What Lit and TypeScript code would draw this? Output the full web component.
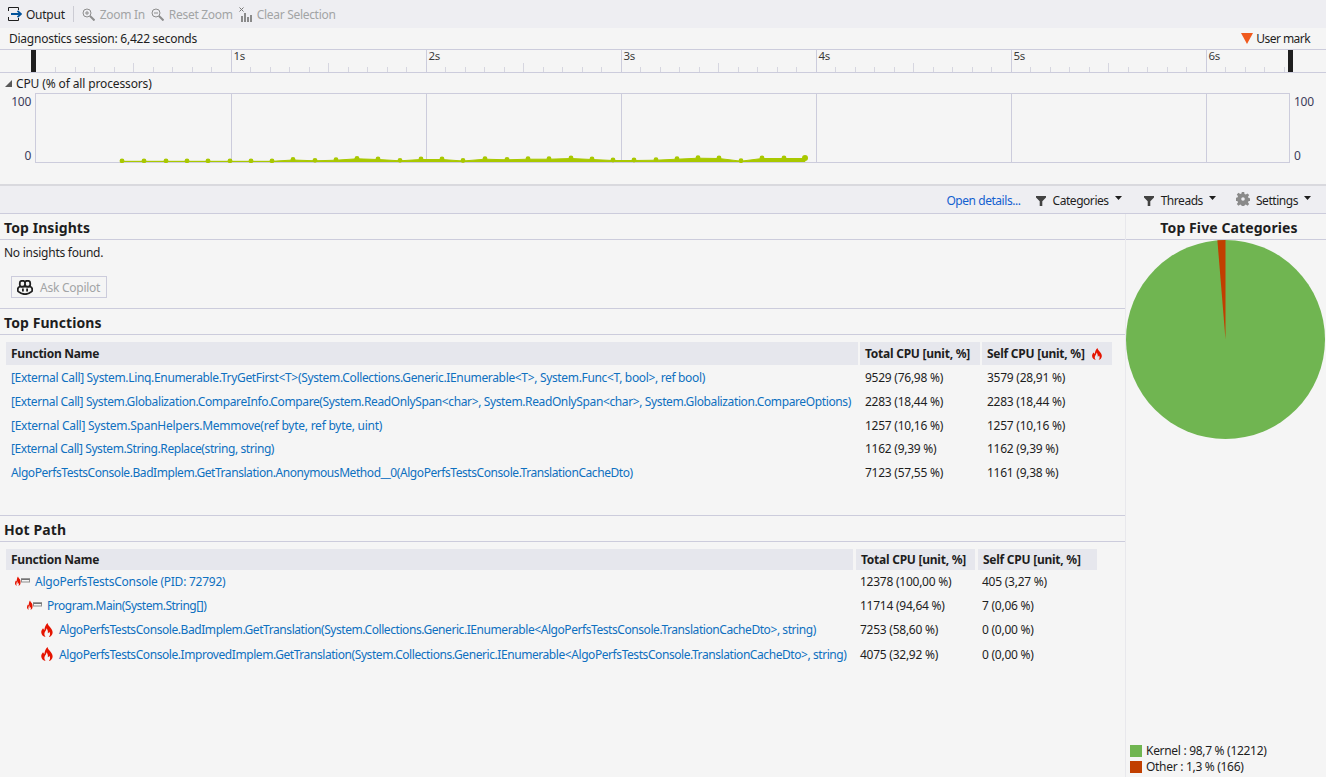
import { LitElement, css, html, svg } from "lit";
import { customElement } from "lit/decorators.js";

interface Row {
  name: string;
  total: string;
  self: string;
  indent?: number;
  icon?: "flame" | "path";
  track: number;
}

const topFunctions: Row[] = [
  { name: "[External Call] System.Linq.Enumerable.TryGetFirst<T>(System.Collections.Generic.IEnumerable<T>, System.Func<T, bool>, ref bool)", total: "9529 (76,98 %)", self: "3579 (28,91 %)", track: -0.335 },
  { name: "[External Call] System.Globalization.CompareInfo.Compare(System.ReadOnlySpan<char>, System.ReadOnlySpan<char>, System.Globalization.CompareOptions)", total: "2283 (18,44 %)", self: "2283 (18,44 %)", track: -0.38 },
  { name: "[External Call] System.SpanHelpers.Memmove(ref byte, ref byte, uint)", total: "1257 (10,16 %)", self: "1257 (10,16 %)", track: -0.25 },
  { name: "[External Call] System.String.Replace(string, string)", total: "1162 (9,39 %)", self: "1162 (9,39 %)", track: -0.42 },
  { name: "AlgoPerfsTestsConsole.BadImplem.GetTranslation.AnonymousMethod__0(AlgoPerfsTestsConsole.TranslationCacheDto)", total: "7123 (57,55 %)", self: "1161 (9,38 %)", track: -0.435 },
];

const hotPath: Row[] = [
  { name: "AlgoPerfsTestsConsole (PID: 72792)", total: "12378 (100,00 %)", self: "405 (3,27 %)", indent: 9, icon: "path", track: -0.25 },
  { name: "Program.Main(System.String[])", total: "11714 (94,64 %)", self: "7 (0,06 %)", indent: 21, icon: "path", track: -0.49 },
  { name: "AlgoPerfsTestsConsole.BadImplem.GetTranslation(System.Collections.Generic.IEnumerable<AlgoPerfsTestsConsole.TranslationCacheDto>, string)", total: "7253 (58,60 %)", self: "0 (0,00 %)", indent: 34, icon: "flame", track: -0.43 },
  { name: "AlgoPerfsTestsConsole.ImprovedImplem.GetTranslation(System.Collections.Generic.IEnumerable<AlgoPerfsTestsConsole.TranslationCacheDto>, string)", total: "4075 (32,92 %)", self: "0 (0,00 %)", indent: 34, icon: "flame", track: -0.43 },
];

// sampled from the cpu graph, [x, y] in page pixels
const cpu: [number, number][] = [
  [122, 160.8], [144, 160.8], [166, 160.8], [187, 160.8], [208, 160.8], [230, 160.8], [251, 160.8], [272, 160.8],
  [293, 159.5], [315, 160.3], [336, 159.7], [357, 158.3], [378, 159], [400, 160.3], [421, 159], [442, 159],
  [463, 160.5], [485, 158.7], [507, 159.3], [528, 158.7], [549, 158.7], [571, 158], [592, 159], [613, 160],
  [634, 160], [656, 159.7], [677, 158.7], [698, 157.7], [719, 158], [741, 160.7], [762, 158], [784, 158], [805, 158],
];

const secX = (s: number) => 36 + s * 195 + 0.5;

const flame = (size = 12) => html`<svg width=${size} height=${size} viewBox="0 0 12 12">
  <path fill="#e51400" d="M6.4 0C6.8 2 8.2 2.8 9.2 4.2 10.3 5.6 11 6.900 10.800 8.500 10.500 10.500 9 11.700 7.600 12 8.800 10.800 9 9.200 8 7.600 7.700 8.300 7.200 8.700 6.700 8.800 7 7.300 6.500 5.600 5.500 4.600 5.500 6 4.700 7 4.100 8 3.500 9.200 3.700 10.800 4.800 12 3 11.700 1.300 10.300 1.100 8.300 .9 6.700 1.700 5.500 2.600 4.500 3 5.100 3.300 5.600 3.800 5.900 3.900 3.800 4.800 1.600 6.400 0Z"/>
</svg>`;

const pathIcon = () => html`<svg width="15" height="10" viewBox="0 0 15 10">
  <path fill="#e51400" d="M3 .5C3.200 1.700 4.300 2.400 5 3.600 5.600 4.800 5.500 6 5.500 7.200 5.400 8.500 4.500 9.500 3.400 9.800 4 9 4.100 8 3.500 7 3.300 7.500 3 7.800 2.600 7.900 2.800 6.900 2.600 6 2.100 5.300 2 6.300 1.500 6.900 1.400 7.800 1.300 8.500 1.500 9.300 2 9.800 .9 9.500 .1 8.500 0 7.400-.1 6.200.5 5.400 1 4.600 1.200 5 1.400 5.300 1.700 5.500 1.700 3.900 2 1.800 3 .5Z"/>
  <path fill="#3c3c3c" d="M6 2.500h9v1.200H6z"/>
  <path fill="#8f8f8f" d="M6 3.700h1V6H6zM14 3.700h1V6h-1zM6 5.500h9v1H6z"/>
</svg>`;

const funnel = html`<svg width="10" height="10" viewBox="0 0 10 10"><path fill="#424242" d="M0 0h10v1.500L6.300 5.300V10H3.700V5.300L0 1.500Z"/></svg>`;

const caret = html`<svg class="caret" width="7" height="4" viewBox="0 0 7 4"><path fill="#1e1e1e" d="M0 0h7L3.500 4Z"/></svg>`;

@customElement("app-root")
export class AppRoot extends LitElement {
  private ruler() {
    const ticks = [];
    for (let i = 1; i * 19.5 + 36 < 1288; i++) {
      if (i % 10 === 0) continue;
      const x = Math.floor(36 + i * 19.5) + 0.5;
      const h = i % 5 === 0 ? 9 : 5;
      ticks.push(svg`<line x1=${x} x2=${x} y1=${22 - h} y2="22" stroke="#d6d6e0" stroke-width="1"/>`);
    }
    return html`<svg width="1326" height="22" viewBox="0 0 1326 22">
        ${ticks}
        ${[1, 2, 3, 4, 5, 6].map((s) => svg`<line x1=${secX(s)} x2=${secX(s)} y1="0" y2="22" stroke="#ccccdc"/>`)}
        <rect x="31" y="0" width="5" height="22" fill="#1e1e1e"/>
        <rect x="1288" y="0" width="5" height="22" fill="#1e1e1e"/>
      </svg>
      ${[1, 2, 3, 4, 5, 6].map((s) => html`<span class="rl" style="left:${secX(s) + 2}px">${s}s</span>`)}`;
  }

  private graph() {
    const top = 93;
    const area = `M122 ${161.5 - top} ` + cpu.map(([x, y]) => `L${x} ${y - top + 0.5}`).join(" ") + ` L805 ${161.5 - top}Z`;
    return html`<svg width="1255" height="70" viewBox="35 0 1255 70">
      <rect x="35.500" y=".5" width="1254" height="69" fill="none" stroke="#ccccdc"/>
      ${[1, 2, 3, 4, 5, 6].map((s) => svg`<line x1=${secX(s)} x2=${secX(s)} y1="0" y2="69" stroke="#ccccdc"/>`)}
      <path d=${area} fill="#a9c800" stroke="#a9c800" stroke-width="1"/>
      ${cpu.map(([x, y], i) => svg`<circle cx=${x} cy=${y - top} r=${i === cpu.length - 1 ? 3 : 2.4} fill="#a9c800"/>`)}
    </svg>`;
  }

  private pie() {
    const a = (1.3 / 100) * Math.PI * 2;
    const x = 100 - Math.sin(a) * 100;
    const y = 100 - Math.cos(a) * 100;
    return html`<svg width="199" height="199" viewBox="0 0 200 200">
      <circle cx="100" cy="100" r="100" fill="#70b551"/>
      <path d="M100 100L100 0A100 100 0 0 0 ${x} ${y}Z" fill="#c13f00"/>
    </svg>`;
  }

  private table(rows: Row[], kind: "top" | "hot") {
    return html`<div class="table ${kind}">
      <div class="th">Function Name</div>
      <div class="th">Total CPU [unit, %]</div>
      <div class="th">Self CPU [unit, %] ${kind === "top" ? flame(12) : ""}</div>
      ${rows.map(
        (r) => html`
          <div class="td name" style="padding-left:${r.indent ?? 5}px">
            ${r.icon === "flame" ? flame(14) : r.icon === "path" ? pathIcon() : ""}<span style="letter-spacing:${r.track}px">${r.name}</span>
          </div>
          <div class="td">${r.total}</div>
          <div class="td">${r.self}</div>
        `,
      )}
    </div>`;
  }

  render() {
    return html`
      <div class="toolbar">
        <span class="tool on">
          <svg width="14" height="14" viewBox="0 0 14 14">
            <path fill="none" stroke="#1e1e1e" d="M.5 4V.5h10V3M10.500 11V13.500H.5V10"/>
            <path fill="none" stroke="#00539c" stroke-width="1.800" d="M3 7h9.500M9.500 3.800 13 7 9.500 10.200"/>
          </svg>
          Output
        </span>
        <span class="sep"></span>
        <span class="tool">
          <svg width="13" height="13" viewBox="0 0 13 13"><circle cx="5" cy="5" r="4" fill="none" stroke="#8e8e8e"/><path stroke="#8e8e8e" d="M3 5h4M5 3v4"/><path stroke="#8e8e8e" stroke-width="2" d="M8 8l4.500 4.500"/></svg>
          Zoom In
        </span>
        <span class="tool">
          <svg width="13" height="13" viewBox="0 0 13 13"><circle cx="5" cy="5" r="4" fill="none" stroke="#8e8e8e"/><path stroke="#8e8e8e" d="M3 5h4"/><path stroke="#8e8e8e" stroke-width="2" d="M8 8l4.500 4.500"/></svg>
          Reset Zoom
        </span>
        <span class="tool last">
          <svg width="14" height="15" viewBox="0 0 14 15"><path stroke="#777" d="M.5 .5l4 4M4.500 .5l-4 4"/><path fill="#8a8a8a" d="M2 9h2v6H2zM5 6h2v9H5zM8 10h2v5H8zM11 8h2v7h-2z"/></svg>
          Clear Selection
        </span>
      </div>

      <div class="session">
        <span>Diagnostics session: 6,422 seconds</span>
        <span class="mark">
          <svg width="12" height="11" viewBox="0 0 12 11"><path fill="#f05a1e" d="M0 0h12L6 11Z"/></svg>
          <span>User mark</span>
        </span>
      </div>

      <div class="ruler-row">${this.ruler()}</div>

      <div class="swimlane">
        <div class="lane-title">
          <svg width="7" height="7" viewBox="0 0 7 7"><path fill="#595959" d="M7 0v7H0Z"/></svg>
          <span>CPU (% of all processors)</span>
        </div>
        <div class="lane">
          <div class="axis left"><span>100</span><span>0</span></div>
          ${this.graph()}
          <div class="axis right"><span>100</span><span>0</span></div>
        </div>
      </div>

      <div class="actions">
        <a>Open details...</a>
        <span class="act">${funnel} Categories ${caret}</span>
        <span class="act threads">${funnel} Threads ${caret}</span>
        <span class="act">
          <svg class="gear" width="14" height="14" viewBox="0 0 14 14">
            <path fill="#8a8a8a" fill-rule="evenodd" d="M5.800 0h2.400l.3 2 1.300.6 1.700-1.200 1.700 1.700-1.200 1.700.6 1.300 2 .3v2.400l-2 .3-.6 1.300 1.200 1.700-1.700 1.700-1.700-1.200-1.300.6-.3 2H5.800l-.3-2-1.300-.6-1.700 1.200-1.700-1.700 1.200-1.700-.6-1.300-2-.3V5.800l2-.3.6-1.300L.8 2.500 2.500.8l1.700 1.200 1.300-.6ZM7 5.200a1.800 1.800 0 1 0 0 3.600 1.800 1.800 0 0 0 0-3.600Z"/>
          </svg>
          Settings ${caret}
        </span>
      </div>

      <div class="body">
        <div class="main">
          <section class="insights">
            <h2>Top Insights</h2>
            <p>No insights found.</p>
            <button>
              <svg width="16" height="15" viewBox="0 0 16 15">
                <path fill="#f5f5f5" stroke="#1e1e1e" stroke-width="1.800" d="M3 6.500C1.700 7 .8 7.800.8 9v1.500c0 .5.200.8.6 1.100C3 12.900 5.500 14.200 8 14.200s5-1.300 6.600-2.600c.4-.3.6-.6.6-1.100V9c0-1.200-.9-2-2.200-2.500Z"/>
                <path fill="#f5f5f5" stroke="#1e1e1e" stroke-width="1.800" d="M5 .8h1c1.200 0 2 .7 2 2v1.500c0 1.500-1 2.400-2.500 2.400-1.600 0-2.700-.5-2.700-1.900V3c0-1.300.9-2.200 2.200-2.200ZM10 .8h1c1.300 0 2.200.9 2.200 2.200v1.800c0 1.400-1.100 1.900-2.700 1.900C9 6.700 8 5.800 8 4.300V2.800c0-1.300.8-2 2-2Z"/>
                <path fill="#1e1e1e" d="M5 8.500h1.800v3H5zM9.200 8.500H11v3H9.200z"/>
              </svg>
              Ask Copilot
            </button>
          </section>
          <section class="functions">
            <h2>Top Functions</h2>
            ${this.table(topFunctions, "top")}
          </section>
          <section class="hotpath">
            <h2>Hot Path</h2>
            ${this.table(hotPath, "hot")}
          </section>
        </div>
        <aside>
          <h2>Top Five Categories</h2>
          ${this.pie()}
          <div class="legend">
            <div><i class="k"></i>Kernel : 98,7 % (12212)</div>
            <div><i class="o"></i>Other : 1,3 % (166)</div>
          </div>
        </aside>
      </div>
    `;
  }

  static styles = css`
    :host {
      display: block;
      width: 1326px;
      height: 777px;
      overflow: hidden;
      background: #f5f5f5;
      color: #1e1e1e;
      font-family: "Noto Sans", "Open Sans", sans-serif;
      font-size: 12px;
      letter-spacing: -0.25px;
    }
    svg {
      display: block;
      flex: none;
    }
    .toolbar {
      display: flex;
      align-items: center;
      height: 28px;
      padding-left: 8px;
      background: #eeeef2;
      color: #a2a4a5;
    }
    .tool {
      display: flex;
      align-items: center;
      gap: 5px;
      margin-right: 6px;
      letter-spacing: -0.3px;
    }
    .tool.on {
      gap: 4px;
      color: #1e1e1e;
      margin-right: 8px;
      letter-spacing: -0.25px;
    }
    .tool.last {
      gap: 4px;
    }
    .sep {
      width: 1px;
      height: 16px;
      background: #ccccd4;
      margin-right: 8px;
    }
    .session {
      display: flex;
      justify-content: space-between;
      align-items: center;
      height: 21px;
      padding: 0 16px 0 9px;
      border-bottom: 1px solid #ccccdc;
    }
    .mark {
      display: flex;
      align-items: center;
      gap: 3px;
    }
    .mark span {
      letter-spacing: -0.55px;
    }
    .ruler-row {
      position: relative;
      height: 22px;
      border-bottom: 1px solid #ccccdc;
    }
    .rl {
      position: absolute;
      top: 0;
      font-size: 11.500px;
      line-height: 12px;
      color: #3a3a3a;
    }
    .swimlane {
      height: 111px;
      border-bottom: 2px solid #d9d9de;
    }
    .lane-title {
      display: flex;
      align-items: center;
      gap: 4px;
      height: 20px;
      padding: 1px 0 0 5px;
      box-sizing: border-box;
      letter-spacing: -0.13px;
    }
    .lane {
      display: flex;
    }
    .axis {
      display: flex;
      flex-direction: column;
      justify-content: space-between;
      height: 71px;
      color: #3c3c5a;
    }
    .axis.left {
      width: 35px;
      padding-right: 4px;
      align-items: flex-end;
      box-sizing: border-box;
    }
    .axis.right {
      padding-left: 4px;
    }
    .actions {
      display: flex;
      justify-content: flex-end;
      align-items: center;
      height: 28px;
      padding: 2px 15px 0 0;
      box-sizing: border-box;
      background: #eeeef2;
      border-bottom: 1px solid #ccccdc;
      letter-spacing: -0.45px;
    }
    .actions a {
      color: #1260d0;
      margin-right: 15px;
    }
    .act {
      display: flex;
      align-items: center;
      gap: 7px;
      margin-right: 22px;
    }
    .act.threads {
      margin-right: 20px;
    }
    .act:last-child {
      margin-right: 0;
    }
    .gear {
      margin: -3px -1px 0 0;
    }
    .caret {
      margin: -6px 0 0 -1px;
    }
    .body {
      display: flex;
      height: 563px;
    }
    .main {
      width: 1125px;
      border-right: 1px solid #e8e8ec;
    }
    aside {
      width: 200px;
      position: relative;
    }
    h2 {
      margin: 0;
      height: 25px;
      line-height: 27px;
      padding-left: 4px;
      font-size: 14px;
      font-weight: 700;
      letter-spacing: 0.08px;
      border-bottom: 1px solid #ccccdc;
    }
    aside h2 {
      padding: 0 0 0 6px;
      text-align: center;
      letter-spacing: 0.1px;
    }
    section.insights {
      height: 94px;
      border-bottom: 1px solid #ccccdc;
    }
    p {
      margin: 0;
      padding: 4px 0 0 4px;
    }
    button {
      display: flex;
      align-items: center;
      gap: 7px;
      margin: 15px 0 0 11px;
      width: 96px;
      height: 22px;
      padding: 0 0 0 5px;
      border: 1px solid #ccccdc;
      background: #f5f5f5;
      color: #a2a4a5;
      font: inherit;
      letter-spacing: inherit;
    }
    section.functions {
      height: 206px;
      border-bottom: 1px solid #ccccdc;
    }
    .table {
      display: grid;
      margin: 7px 0 0 6px;
      width: fit-content;
    }
    .top {
      grid-template-columns: 852px 120px 130px;
      column-gap: 2px;
      grid-template-rows: 24px;
      grid-auto-rows: 23.700px;
    }
    .hot {
      grid-template-columns: 847px 119px 119px;
      column-gap: 3px;
      grid-template-rows: 21px;
      grid-auto-rows: 24.300px;
    }
    .th {
      display: flex;
      align-items: center;
      gap: 6px;
      height: 23px;
      padding-left: 5px;
      background: #e6e7ed;
      font-weight: 700;
    }
    .hot .th {
      height: 21px;
    }
    .td {
      display: flex;
      align-items: center;
      padding-left: 5px;
      white-space: nowrap;
    }
    .hot .td {
      padding-left: 4px;
      padding-bottom: 2px;
    }
    .name {
      color: #0e70c0;
      gap: 5px;
    }
    .legend {
      position: absolute;
      left: 4px;
      bottom: 2px;
      line-height: 16px;
      letter-spacing: -0.3px;
    }
    .legend div {
      display: flex;
      align-items: center;
      gap: 4px;
    }
    .legend i {
      width: 12px;
      height: 12px;
    }
    .k {
      background: #70b551;
    }
    .o {
      background: #c13f00;
    }
  `;
}
